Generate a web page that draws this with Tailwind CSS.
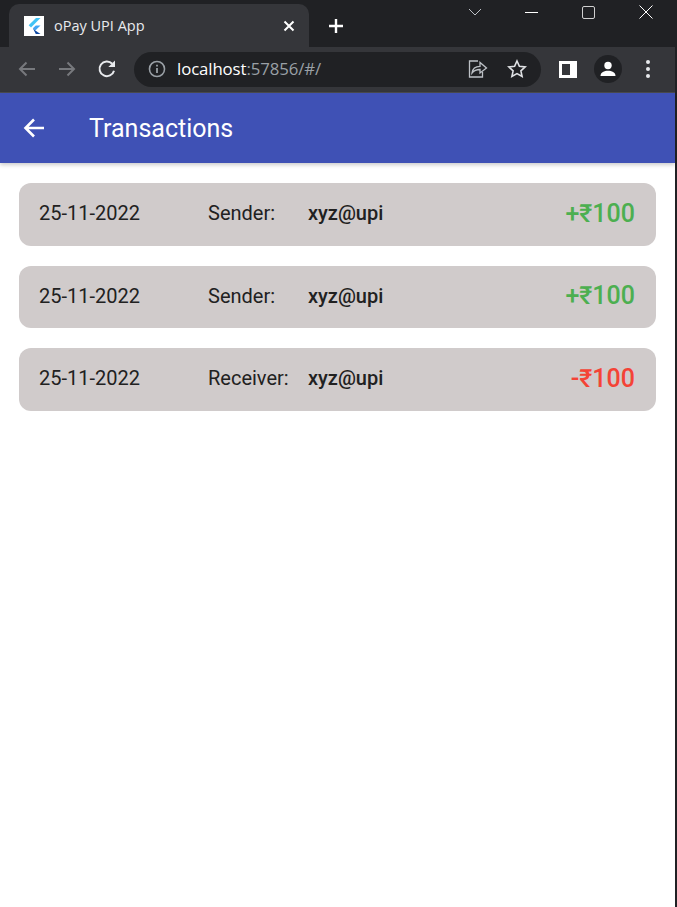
<!DOCTYPE html>
<html>

<head>
    <title>oPay UPI App</title>
    <meta charset="UTF-8">
    <meta name="viewport" content="width=device-width, initial-scale=1.0">
    <script src="https://cdn.jsdelivr.net/npm/@tailwindcss/browser@4"></script>
</head>

<body class="bg-white overflow-hidden">
    <div class="h-[907px] w-[677px] flex flex-col border-r-2 border-[#202124] font-['Roboto',sans-serif]">

        <!-- tab strip -->
        <div class="h-[47px] shrink-0 bg-[#202124] flex items-start">
            <div class="ml-[9px] mt-[4px] w-[300px] h-[43px] bg-[#35363a] rounded-t-[10px] flex items-center pl-[15px] pr-[14px]">
                <div class="w-[20px] h-[20px] bg-white flex items-center justify-center shrink-0">
                    <svg width="16" height="18" viewBox="0 0 16 18">
                        <path d="M10 1h4.500L5 10.500 2.700 8.200z" fill="#42c3f5" />
                        <path d="M9.800 8.500h4.700L9.300 13.500 6.900 11.200z" fill="#42a5f5" />
                        <path d="M6.900 11.200l2.400 2.300 5.200 3.500H9.800z" fill="#0d47a1" />
                    </svg>
                </div>
                <span class="ml-[10px] text-[14.5px] text-[#e8eaed] font-['Open_Sans',sans-serif] flex-1">oPay UPI App</span>
                <svg width="12" height="12" viewBox="0 0 12 12" stroke="#fff" stroke-width="2">
                    <path d="M1.500 1.500l9 9M10.500 1.500l-9 9" />
                </svg>
            </div>
            <svg class="ml-[19px] mt-[18px]" width="16" height="16" viewBox="0 0 16 16" stroke="#fff" stroke-width="2.400">
                <path d="M8 1v14M1 8h14" />
            </svg>
            <div class="ml-auto flex w-[215px] h-[24px] items-center">
                <div class="w-[29px] flex justify-center">
                    <svg width="14" height="8" viewBox="0 0 14 8" fill="none" stroke="#bdc1c6">
                        <path d="M1 1l6 6 6-6" />
                    </svg>
                </div>
                <div class="w-[57px] ml-[14px] flex justify-center">
                    <div class="w-[13px] h-px bg-white"></div>
                </div>
                <div class="w-[57px] flex justify-center">
                    <div class="w-[13px] h-[13px] border border-[#d0d0d0] rounded-[2px]"></div>
                </div>
                <div class="w-[57px] flex justify-center">
                    <svg width="14" height="14" viewBox="0 0 14 14" stroke="#fff">
                        <path d="M.5.500l13 13M13.500.500l-13 13" />
                    </svg>
                </div>
            </div>
        </div>

        <!-- address bar -->
        <div class="h-[46px] shrink-0 bg-[#35363a] border-b border-[#4a4b4f] flex items-center pb-px">
            <svg class="ml-[18px]" width="18" height="16" viewBox="0 0 18 16" fill="none" stroke="#77797d" stroke-width="2">
                <path d="M17 8H2M8.500 1.500L2 8l6.500 6.500" />
            </svg>
            <svg class="ml-[22px]" width="18" height="16" viewBox="0 0 18 16" fill="none" stroke="#77797d" stroke-width="2">
                <path d="M1 8h15M9.500 1.500L16 8l-6.500 6.500" />
            </svg>
            <svg class="ml-[21px]" width="20" height="20" viewBox="0 0 18 18" fill="none">
                <path d="M15.300 10.500A6.600 6.600 0 1 1 13.700 4.300" stroke="#e8eaed" stroke-width="1.800" />
                <path d="M16.200 1.300v6h-6z" fill="#e8eaed" />
            </svg>
            <div class="ml-[17px] w-[407px] h-[35px] rounded-full bg-[#202124] flex items-center pl-[14px] pr-[14px]">
                <svg width="18" height="18" viewBox="0 0 16 16" fill="none">
                    <circle cx="8" cy="8" r="6.700" stroke="#9aa0a6" stroke-width="1.400" />
                    <path d="M8 7v4.500M8 4.200v1.500" stroke="#9aa0a6" stroke-width="1.600" />
                </svg>
                <span class="ml-[11px] text-[16.8px] tracking-[-0.1px] font-['Open_Sans',sans-serif] text-white flex-1">localhost<span class="text-[#9aa0a6]">:57856/#/</span></span>
                <svg class="ml-px" width="20" height="20" viewBox="0 0 20 20" fill="none" stroke="#bdc1c6" stroke-width="1.300">
                    <path d="M10 2.500H1.500v16h13v-5" transform="translate(0 -.5)" />
                    <path d="M4 14c.5-4 3.500-6.700 8-6.700V3.500L18.500 9 12 14v-3.500c-3.500 0-6 1-8 3.500z" />
                </svg>
                <svg class="ml-[19px]" width="20" height="20" viewBox="0 0 20 20" fill="none" stroke="#e0e2e5" stroke-width="1.600">
                    <path d="M10 2l2.400 5.300 5.800.6-4.300 3.900 1.200 5.700L10 14.600l-5.100 2.900 1.200-5.700L1.800 7.900l5.800-.6z" />
                </svg>
            </div>
            <div class="ml-[18px] w-[18px] h-[17px] bg-white flex items-center pl-[3px]">
                <div class="w-[8px] h-[11px] bg-[#35363a]"></div>
            </div>
            <div class="ml-[17px] w-[28px] h-[28px] rounded-full bg-[#202124] flex items-center justify-center">
                <svg width="18" height="18" viewBox="0 0 18 18" fill="#fff">
                    <circle cx="9" cy="5.500" r="3.700" />
                    <path d="M1.500 16c0-3.800 3.800-5.300 7.500-5.300s7.500 1.500 7.500 5.300z" />
                </svg>
            </div>
            <div class="ml-[24px] flex flex-col gap-[3px]">
                <div class="w-[4px] h-[4px] rounded-full bg-[#e8eaed]"></div>
                <div class="w-[4px] h-[4px] rounded-full bg-[#e8eaed]"></div>
                <div class="w-[4px] h-[4px] rounded-full bg-[#e8eaed]"></div>
            </div>
        </div>

        <!-- app bar -->
        <div class="h-[70px] shrink-0 bg-[#3f51b5] flex items-center shadow-[0_2px_4px_rgba(0,0,0,0.2)] z-10">
            <svg class="ml-[23px]" width="21" height="20" viewBox="0 0 21 20" fill="none" stroke="#fff" stroke-width="2.600">
                <path d="M21 10H3M11 1.500L2.500 10l8.500 8.500" />
            </svg>
            <h1 class="ml-[45px] pt-[2px] text-[25px] text-white">Transactions</h1>
        </div>

        <!-- transactions -->
        <div class="flex-1 bg-white pt-[20px] pl-[19px] pr-[19px] flex flex-col gap-[20px]">
            <div class="h-[62.5px] bg-[#d0cbcb] rounded-[12px] flex items-center pl-[20px] pr-[21px] pb-[2px] text-[#212121]">
                <span class="w-[169px] text-[20px]">25-11-2022</span>
                <span class="w-[100px] text-[20px]">Sender:</span>
                <span class="text-[20px] font-medium">xyz@upi</span>
                <span class="ml-auto text-[25px] font-medium text-[#4caf50]">+₹100</span>
            </div>
            <div class="h-[62.5px] bg-[#d0cbcb] rounded-[12px] flex items-center pl-[20px] pr-[21px] pb-[2px] text-[#212121]">
                <span class="w-[169px] text-[20px]">25-11-2022</span>
                <span class="w-[100px] text-[20px]">Sender:</span>
                <span class="text-[20px] font-medium">xyz@upi</span>
                <span class="ml-auto text-[25px] font-medium text-[#4caf50]">+₹100</span>
            </div>
            <div class="h-[62.5px] bg-[#d0cbcb] rounded-[12px] flex items-center pl-[20px] pr-[21px] pb-[2px] text-[#212121]">
                <span class="w-[169px] text-[20px]">25-11-2022</span>
                <span class="w-[100px] text-[20px]">Receiver:</span>
                <span class="text-[20px] font-medium">xyz@upi</span>
                <span class="ml-auto text-[25px] font-medium text-[#f44336]">-₹100</span>
            </div>
        </div>
    </div>
</body>

</html>
